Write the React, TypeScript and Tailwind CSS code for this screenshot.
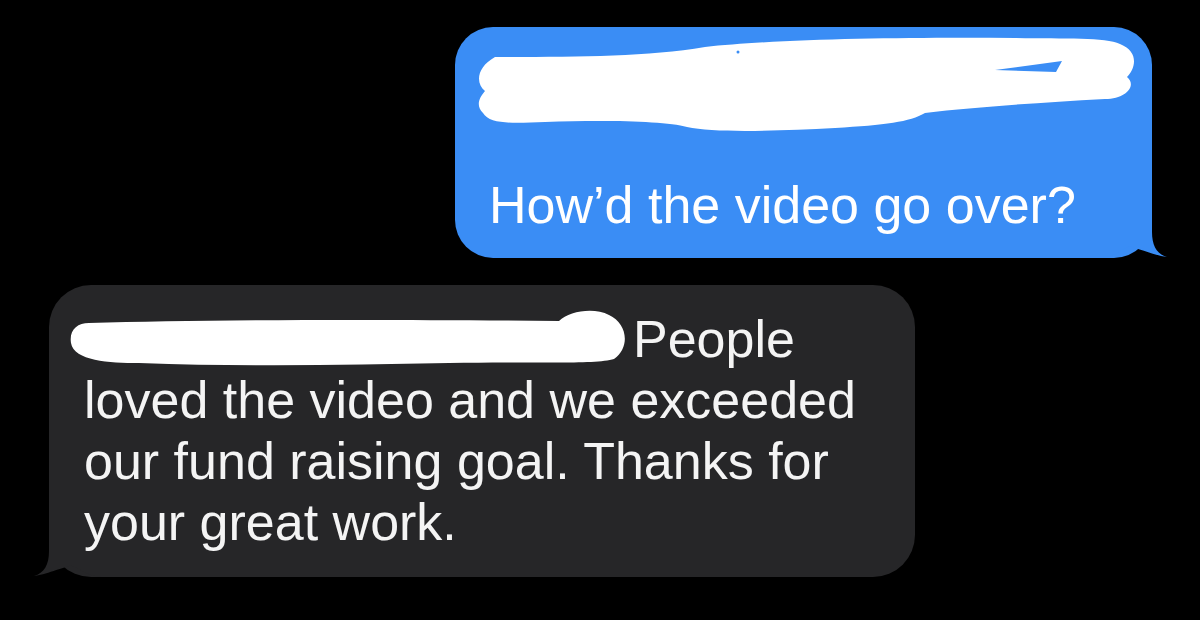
import React from "react";

function Tail({ color, className }: { color: string; className: string }) {
  return (
    <svg
      className={className}
      width="77"
      height="50"
      viewBox="0 0 77 50"
      aria-hidden="true"
    >
      <path
        d="M0 0 L62 0 L62 24 C62 38 67 46 77 49 C67 48 47 40 40 38.5 C33 40 25 49 10 50 L0 50 Z"
        fill={color}
      />
    </svg>
  );
}

export default function App() {
  const font = { fontFamily: '"Liberation Sans", Arial, sans-serif' };
  return (
    <div
      className="w-[1200px] h-[620px] bg-black overflow-hidden flex flex-col pt-[27px]"
      style={font}
    >
      {/* Outgoing blue bubble */}
      <div className="self-end mr-[48px] relative w-[697px] rounded-[38px] bg-[#3a8df5] px-[34px] pt-[26px] pb-[22px]">
        <Tail color="#3a8df5" className="absolute right-[-15px] bottom-0" />
        <div className="h-[122px]" />
        <div className="relative text-[52px] leading-[61px] text-white whitespace-nowrap">
          How’d the video go over?
        </div>
        <svg
          className="absolute left-0 top-0"
          width="697"
          height="231"
          viewBox="0 0 697 231"
          aria-hidden="true"
        >
          <path
            d="M40 30 C120 30 190 30 250 20 C320 12 450 10 560 11 C610 12 650 10 665 17 C685 25 680 42 672 50 C682 58 672 72 650 72 C580 76 520 80 470 86 C455 95 430 98 380 101 C320 104 260 106 232 100 C210 94 150 93 90 95 C60 96 35 98 28 86 C20 78 25 70 30 64 C20 56 22 40 40 30 Z"
            fill="#ffffff"
          />
          <polygon points="540,43 607,34 601,45" fill="#3a8df5" />
          <circle cx="283" cy="25" r="1.5" fill="#3a8df5" />
        </svg>
      </div>

      {/* Incoming gray bubble */}
      <div className="self-start ml-[49px] mt-[27px] relative w-[866px] rounded-[42px] bg-[#262628] px-[35px] pt-[24px] pb-[24px]">
        <Tail
          color="#262628"
          className="absolute left-[-15px] bottom-0 -scale-x-100"
        />
        <svg
          className="absolute left-0 top-0"
          width="866"
          height="120"
          viewBox="0 0 866 120"
          aria-hidden="true"
        >
          <path
            d="M40 38 C150 35 300 34 510 36 C520 26 545 22 560 30 C578 38 582 62 565 74 C545 80 480 76 400 78 C300 80 200 82 90 78 C60 78 25 76 22 58 C20 45 28 38 40 38 Z"
            fill="#ffffff"
          />
        </svg>
        <div className="relative text-[52px] leading-[61px] text-[#f4f4f4] whitespace-nowrap">
          <div>
            <span className="inline-block w-[549px]" />
            People
          </div>
          <div>loved the video and we exceeded</div>
          <div>our fund raising goal. Thanks for</div>
          <div>your great work.</div>
        </div>
      </div>
    </div>
  );
}
